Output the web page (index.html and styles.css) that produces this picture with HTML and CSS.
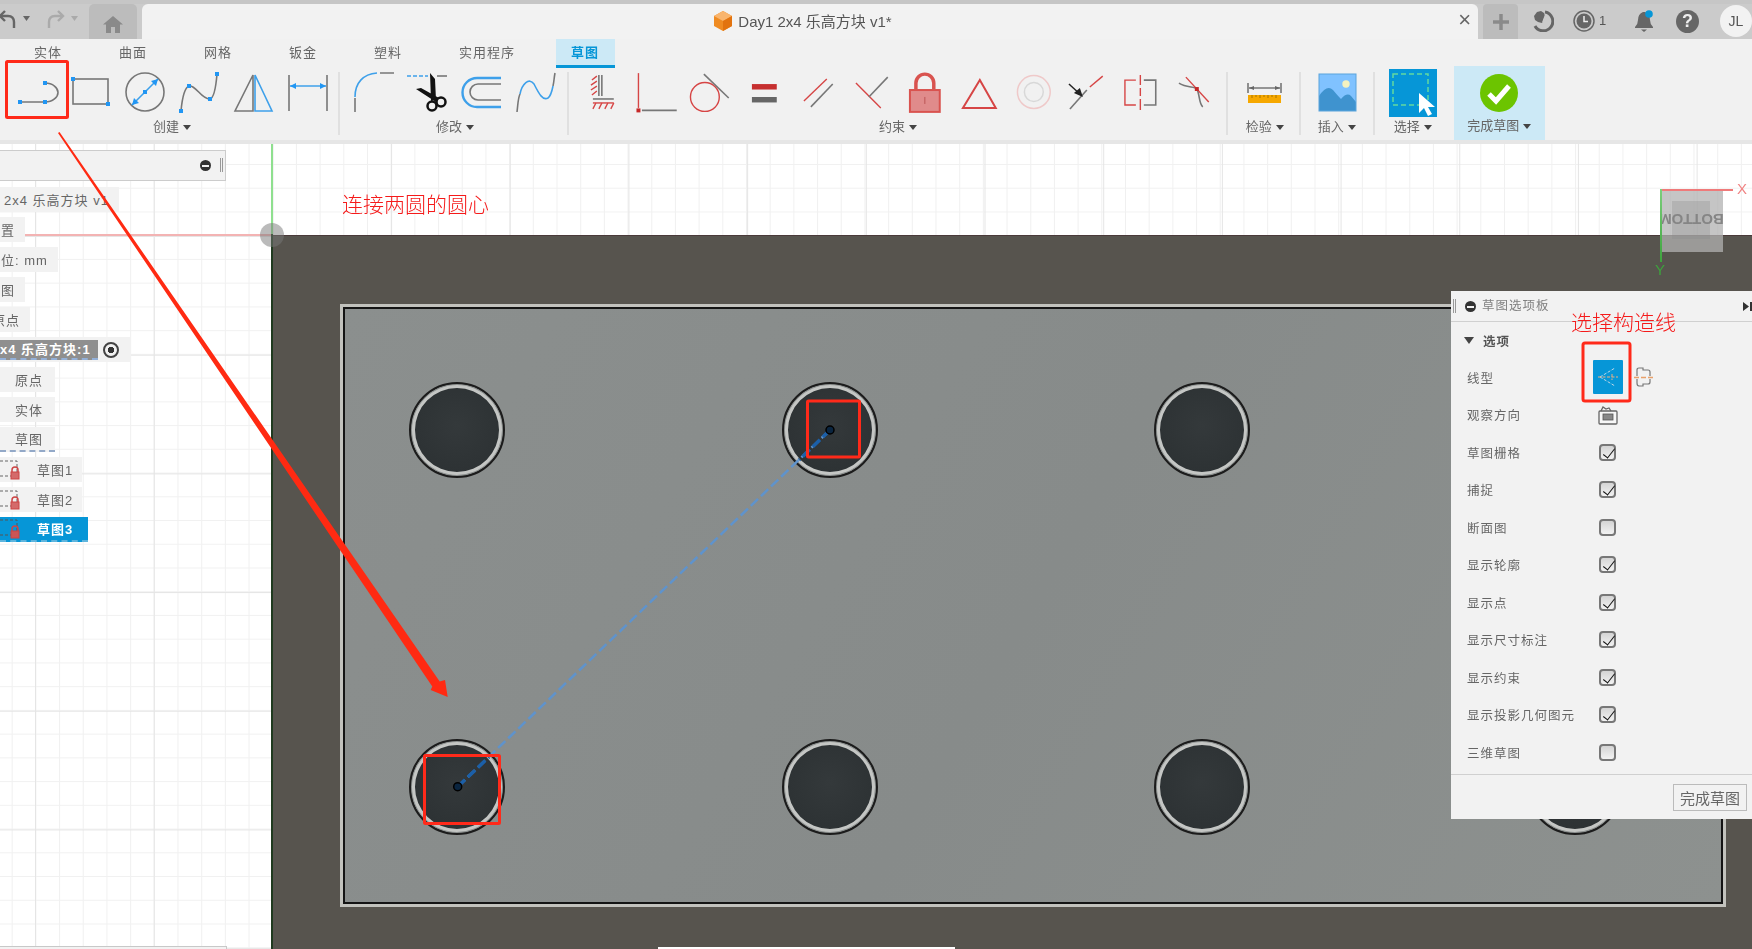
FILE: index.html
```html
<!DOCTYPE html>
<html lang="zh">
<head>
<meta charset="utf-8">
<title>Day1 2x4 乐高方块 v1*</title>
<link rel="stylesheet" href="styles.css">
</head>
<body>
<div class="app">
  <header class="topbar">
    <div class="history">
      <svg class="hist" width="78" height="24" viewBox="0 0 78 24"><path d="M14 21V15Q14 9 8 9H0" fill="none" stroke="#666" stroke-width="2.4"/><path d="M5 4L0 9L5 14" fill="none" stroke="#666" stroke-width="2.4"/><path d="M23 9H30L26.500 14Z" fill="#666"/><path d="M49 21V15Q49 9 55 9H62" fill="none" stroke="#aaa" stroke-width="2.400"/><path d="M58 4L63 9L58 14" fill="none" stroke="#aaa" stroke-width="2.400"/><path d="M71 9H78L74.500 14Z" fill="#aaa"/></svg>
    </div>
    <div class="hometab"><svg width="20" height="18" viewBox="0 0 20 18"><path d="M10 1L0 9.500H3V18H8V12H12V18H17V9.500H20Z" fill="#8a8a8a"/></svg></div>
    <div class="doctab">
      <svg class="cube" width="18" height="20" viewBox="0 0 18 20"><path d="M9 0L18 5V15L9 20L0 15V5Z" fill="#ef8b22"/><path d="M9 0L18 5L9 10L0 5Z" fill="#f9b56e"/><path d="M9 10L18 5V15L9 20Z" fill="#e2730f"/></svg>
      <span class="doctitle">Day1 2x4 乐高方块 v1*</span>
      <span class="close">×</span>
    </div>
    <div class="plustab"><svg width="16" height="16" viewBox="0 0 16 16"><path d="M8 0V16M0 8H16" stroke="#8a8a8a" stroke-width="3.500"/></svg></div>
    <svg class="jobs" width="22" height="22" viewBox="0 0 22 22"><path d="M13 2A9.500 9.500 0 1 1 3 16" fill="none" stroke="#666" stroke-width="3"/><path d="M2 6L5 2L9 1L12 3L13 6L10 13L6 12L3 10Z" fill="#666"/><path d="M14 4L11 12" stroke="#cbcbcb" stroke-width="1.500"/></svg>
    <span class="clockwrap"><svg width="22" height="22" viewBox="0 0 22 22"><circle cx="11" cy="11" r="10" fill="none" stroke="#666" stroke-width="1.500"/><circle cx="11" cy="11" r="7.500" fill="#666"/><path d="M11 6V11.500H15" fill="none" stroke="#eee" stroke-width="1.500"/></svg><span class="count">1</span></span>
    <svg class="bell" width="20" height="24" viewBox="0 0 20 24"><path d="M8 3Q3 5 3 11Q3 15 0 18V19H18V18Q15 15 15 11Q15 5 10 3Z" fill="#666"/><path d="M6 20.500H12L9 23Z" fill="#666"/><circle cx="14" cy="5" r="3.800" fill="#0696d7"/></svg>
    <span class="help">?</span>
    <span class="avatar">JL</span>
  </header>

  <section class="ribbon">
    <nav class="tabs">
      <span class="tab">实体</span><span class="tab">曲面</span><span class="tab">网格</span><span class="tab">钣金</span><span class="tab">塑料</span><span class="tab">实用程序</span><span class="tab tab-active">草图</span>
    </nav>
    <div class="toolrow">
      <div class="group">
        <div class="tools">
          <svg class="tool" viewBox="0 0 54 48"><path d="M10 32H35M35 13C43 13 48 18 48 22.500C48 27 43 32 35 32" class="g"/><path d="M8 30h4v4h-4zM33 30h4v4h-4zM33 11h4v4h-4z" class="bf"/></svg>
          <svg class="tool" viewBox="0 0 54 48"><rect x="9" y="9" width="35" height="25" class="g"/><path d="M7 7h4v4h-4zM42 32h4v4h-4z" class="bf"/></svg>
          <svg class="tool" viewBox="0 0 54 48"><circle cx="27" cy="22" r="19" class="g"/><path d="M14 35L40 9" class="b"/><path d="M40 9L33 11L38 16ZM14 35L21 33L16 28Z" class="bf"/><path d="M25 20h4v4h-4z" class="bf"/></svg>
          <svg class="tool" viewBox="0 0 54 48"><path d="M9 41C10 30 12 18 17 16C23 14 30 30 38 29C42 28 44 16 45 4" class="g"/><path d="M7 39h4v4h-4zM15 14h4v4h-4zM36 27h4v4h-4zM43 2h4v4h-4z" class="bf"/></svg>
          <svg class="tool" viewBox="0 0 54 48"><path d="M27 5V41H9Z" class="g"/><path d="M29 5L46 41H29Z" class="b"/></svg>
          <svg class="tool" viewBox="0 0 54 48"><path d="M9 5V41M47 5V41" class="g"/><path d="M10 16H46" class="b"/><path d="M10 16L16 13V19ZM46 16L40 13V19Z" class="bf"/></svg>
        </div>
        <div class="glabel">创建<i class="caret"></i></div>
      </div>
      <i class="sep sep-a"></i>
      <div class="group">
        <div class="tools">
          <svg class="tool" viewBox="0 0 54 48"><path d="M8 42V28M33 3H47" class="g"/><path d="M8 27C8 13 16 4 30 3" class="b"/></svg>
          <svg class="tool" viewBox="0 0 54 48"><path d="M6 6H27" class="b" stroke-dasharray="4 2"/><path d="M36 6H46" class="g"/><path d="M15 19L20 18L38 28L35 32ZM29 3L34 9L35 30L30 31Z" fill="#111"/><circle cx="31" cy="36" r="4.500" fill="none" stroke="#111" stroke-width="2.500"/><circle cx="40" cy="32" r="4.500" fill="none" stroke="#111" stroke-width="2.500"/></svg>
          <svg class="tool" viewBox="0 0 54 48"><path d="M46 8H22A14.500 14.500 0 0 0 22 37H46" class="b2"/><path d="M46 14H23A8 8 0 0 0 23 30H46" class="g"/></svg>
          <svg class="tool" viewBox="0 0 54 48"><path d="M8 42C9 34 9 28 11 24M44 16C45 12 45 8 46 3" class="g"/><path d="M11 24C13 14 20 7 25 14C30 24 34 31 39 28C42 26 43 21 44 16" class="b"/></svg>
        </div>
        <div class="glabel">修改<i class="caret"></i></div>
      </div>
      <i class="sep sep-a"></i>
      <div class="group">
        <div class="tools tools-tight">
          <svg class="tool" viewBox="0 0 54 48"><path d="M23 5V26M26 5V26" class="g"/><path d="M21 6L16 10M21 11L15 15M21 16L15 20M21 21L16 25" class="r"/><path d="M17 29H38" class="g"/><path d="M17 33H38" class="r"/><path d="M20 33L17 39M26 33L23 39M32 33L29 39M38 33L35 39" class="r"/></svg>
          <svg class="tool" viewBox="0 0 54 48"><path d="M8.500 3V38" class="r"/><path d="M12 40.500H47" class="g"/><path d="M6.500 38.500h4v4h-4z" fill="#c62828"/></svg>
          <svg class="tool" viewBox="0 0 54 48"><circle cx="22" cy="27" r="14.500" class="r"/><path d="M21 4L46 28" class="g"/></svg>
          <svg class="tool" viewBox="0 0 54 48"><path d="M15 14h25v5.500h-25z" fill="#c62f2f"/><path d="M15 27h25v5.500h-25z" fill="#666"/></svg>
          <svg class="tool" viewBox="0 0 54 48"><path d="M13 31L36 9" class="r"/><path d="M20 37L42 14" class="g"/></svg>
          <svg class="tool" viewBox="0 0 54 48"><path d="M12 13L37 38" class="r"/><path d="M25 27L44 7" class="g"/></svg>
          <svg class="tool" viewBox="0 0 54 48"><path d="M18 19V13A9 9 0 0 1 36 13V19" fill="none" stroke="#d9534f" stroke-width="3.500"/><rect x="12" y="20" width="30" height="22" fill="#e08b8b" stroke="#d9534f" stroke-width="2"/><path d="M27 27V34" stroke="#b55" stroke-width="1"/></svg>
          <svg class="tool" viewBox="0 0 54 48"><path d="M28 10L11 38H44Z" class="r r2"/></svg>
          <svg class="tool" viewBox="0 0 54 48"><circle cx="28" cy="22" r="16.500" fill="none" stroke="#efc9c9" stroke-width="1.500"/><circle cx="28" cy="22" r="9.500" fill="none" stroke="#d8d8d8" stroke-width="1.500"/></svg>
          <svg class="tool" viewBox="0 0 54 48"><path d="M11 39L28 20" class="g"/><path d="M31 17L44 6" class="r"/><path d="M10 14L21 24" stroke="#222" stroke-width="1.500"/><path d="M24 27L15 23L21 18Z" fill="#222"/></svg>
          <svg class="tool" viewBox="0 0 54 48"><path d="M23 10H12V35H23" class="r"/><path d="M31 10H43V35H31" class="g"/><path d="M27.500 5V15M27.500 18V26M27.500 29V40" class="r"/></svg>
          <svg class="tool" viewBox="0 0 54 48"><path d="M12 13C20 18 28 16 30 19C33 24 32 34 36 37" class="g"/><path d="M19 7L42 32" class="r"/><path d="M28 17h4v4h-4z" fill="#c62828"/></svg>
        </div>
        <div class="glabel">约束<i class="caret"></i></div>
      </div>
      <i class="sep sep-b"></i>
      <div class="group">
        <div class="tools">
          <svg class="tool" viewBox="0 0 54 48"><path d="M10 13V23M43 13V23M11 18H42" class="g"/><path d="M11 18L16 16V20ZM42 18L37 16V20Z" fill="#666"/><path d="M10 25h33v8h-33z" fill="#f6a800"/><path d="M14 25v3M18 25v2M22 25v3M26 25v2M30 25v3M34 25v2M38 25v3" stroke="#a87400" stroke-width="1"/></svg>
        </div>
        <div class="glabel">检验<i class="caret"></i></div>
      </div>
      <i class="sep sep-c"></i>
      <div class="group">
        <div class="tools">
          <svg class="tool" viewBox="0 0 54 48"><rect x="9" y="4" width="37" height="37" fill="#80c2ff"/><circle cx="36" cy="14" r="3.700" fill="#f5f2c0"/><path d="M9 41V26Q17 14 23 20Q28 26 31 29Q37 22 41 26L46 32V41Z" fill="#3f93cf"/><rect x="9" y="4" width="37" height="37" fill="none" stroke="#5ba4dc" stroke-width="1"/></svg>
        </div>
        <div class="glabel">插入<i class="caret"></i></div>
      </div>
      <i class="sep sep-d"></i>
      <div class="group">
        <svg class="selecticon" viewBox="0 0 48 48"><rect width="48" height="48" fill="#0696d7"/><rect x="4" y="5" width="35" height="31" fill="none" stroke="#63d9a0" stroke-width="1.500" stroke-dasharray="5 3"/><path d="M30 24V44L35 39L39 47L43 45L39 38H46Z" fill="#fff"/></svg>
        <div class="glabel">选择<i class="caret"></i></div>
      </div>
      <div class="finish">
        <svg width="38" height="38" viewBox="0 0 38 38"><circle cx="19" cy="19" r="19" fill="#6cc400"/><path d="M9 20L16 27L29 12" fill="none" stroke="#fff" stroke-width="5"/></svg>
        <div class="glabel finlabel">完成草图<i class="caret"></i></div>
      </div>
    </div>
  </section>

  <main class="canvas">
    <i class="axis-red"></i>
    <div class="model">
      <div class="plate">
        <i class="hole"></i><i class="hole"></i><i class="hole"></i><i class="hole"></i>
        <i class="hole"></i><i class="hole"></i><i class="hole"></i><i class="hole"></i>
      </div>
    </div>
    <i class="axis-green"></i>
    <i class="origin"></i>
    <svg class="sketch" width="1752" height="805" viewBox="0 144 1752 805">
      <path d="M457.700 786.700L830 430" fill="none" stroke="#5f93cc" stroke-width="2.500" stroke-dasharray="10 4"/>
      <path d="M457.700 786.700L489 757M830 430L799 460" fill="none" stroke="#1b5fa8" stroke-width="3.500" stroke-dasharray="10 4"/>
      <circle cx="457.700" cy="786.700" r="4" fill="#0a2540" stroke="#000" stroke-width="1.500"/>
      <circle cx="830" cy="430" r="4" fill="#0a2540" stroke="#000" stroke-width="1.500"/>
    </svg>

    <aside class="browser">
      <div class="bhead"><i class="minus"></i><i class="grip"></i></div>
      <div class="brow"><span>2x4 乐高方块 v1</span></div>
      <div class="brow"><span class="clip13">设置</span></div>
      <div class="brow"><span class="clip13">单位: mm</span></div>
      <div class="brow"><span class="clip13">视图</span></div>
      <div class="brow"><span class="clip8">原点</span></div>
      <div class="brow brow-comp"><span class="compname">x4 乐高方块:1</span><i class="radio"></i></div>
      <div class="brow brow-in"><span>原点</span></div>
      <div class="brow brow-in"><span>实体</span></div>
      <div class="brow brow-in brow-dash"><span>草图</span></div>
      <div class="brow brow-sk">
        <svg width="20" height="24" viewBox="0 0 20 24"><path d="M0 3H17V18M0 18H12" fill="none" stroke="#666" stroke-width="1" stroke-dasharray="3 2"/><path d="M12 14V12A3 3 0 0 1 18 12V14" fill="none" stroke="#c44" stroke-width="1.500"/><rect x="11" y="14" width="8" height="7" fill="#d46a6a" stroke="#c44"/></svg>
        <span>草图1</span>
      </div>
      <div class="brow brow-sk">
        <svg width="20" height="24" viewBox="0 0 20 24"><path d="M0 3H17V18M0 18H12" fill="none" stroke="#666" stroke-width="1" stroke-dasharray="3 2"/><path d="M12 14V12A3 3 0 0 1 18 12V14" fill="none" stroke="#c44" stroke-width="1.500"/><rect x="11" y="14" width="8" height="7" fill="#d46a6a" stroke="#c44"/></svg>
        <span>草图2</span>
      </div>
      <div class="brow brow-sk brow-sel">
        <svg width="20" height="24" viewBox="0 0 20 24"><path d="M0 3H17V18M0 18H12" fill="none" stroke="#555" stroke-width="1" stroke-dasharray="3 2"/><path d="M12 14V12A3 3 0 0 1 18 12V14" fill="none" stroke="#c44" stroke-width="1.500"/><rect x="11" y="14" width="8" height="7" fill="#c55" stroke="#c44"/></svg>
        <span>草图3</span>
      </div>
    </aside>

    <div class="gizmo">
      <div class="cubeface"><i class="cubeinner"></i><span class="cubetext">BOTTOM</span></div>
      <i class="gx"></i><i class="gy"></i>
      <span class="lx">X</span><span class="ly">Y</span>
    </div>

    <aside class="options">
      <div class="ophead"><i class="grip"></i><i class="minus"></i><span class="optitle">草图选项板</span><svg class="opend" width="9" height="9" viewBox="0 0 9 9"><path d="M0 0L6 4.500L0 9ZM7 0H9V9H7Z" fill="#333"/></svg></div>
      <div class="opsection"><i class="tri"></i><span>选项</span></div>
      <div class="oprow"><span>线型</span><span class="opctl">
        <span class="linebtn"><svg width="22" height="22" viewBox="0 0 22 22"><path d="M3 11L18 2M3 11L18 20" stroke="#bcd6e8" stroke-width="1" stroke-dasharray="3 1.500" fill="none"/><path d="M1 11H21M15 8V14" stroke="#f0b080" stroke-width="1" stroke-dasharray="3 1.500" fill="none"/></svg></span>
        <svg class="linealt" width="20" height="20" viewBox="0 0 20 20"><path d="M3 9V3Q3 1 5 1H9V3H14Q16 3 16 5V9M3 12V16Q3 19 5 19H9V17H14Q16 17 16 15V12" fill="none" stroke="#777" stroke-width="1.200"/><path d="M0 10.500H20" stroke="#e8a06a" stroke-width="1.400" stroke-dasharray="5 2"/></svg>
      </span></div>
      <div class="oprow"><span>观察方向</span><span class="opctl"><svg width="20" height="20" viewBox="0 0 20 20"><rect x="1" y="6" width="18" height="13" rx="1" fill="#f7f7f7" stroke="#666" stroke-width="1.300"/><rect x="5" y="9" width="10" height="6" fill="#888" stroke="#555" stroke-width=".8"/><path d="M3 6L5 2L8 4L11 3L13 6" fill="none" stroke="#666" stroke-width="1.300"/></svg></span></div>
      <div class="oprow"><span>草图栅格</span><span class="opctl"><i class="cb on"></i></span></div>
      <div class="oprow"><span>捕捉</span><span class="opctl"><i class="cb on"></i></span></div>
      <div class="oprow"><span>断面图</span><span class="opctl"><i class="cb"></i></span></div>
      <div class="oprow"><span>显示轮廓</span><span class="opctl"><i class="cb on"></i></span></div>
      <div class="oprow"><span>显示点</span><span class="opctl"><i class="cb on"></i></span></div>
      <div class="oprow"><span>显示尺寸标注</span><span class="opctl"><i class="cb on"></i></span></div>
      <div class="oprow"><span>显示约束</span><span class="opctl"><i class="cb on"></i></span></div>
      <div class="oprow"><span>显示投影几何图元</span><span class="opctl"><i class="cb on"></i></span></div>
      <div class="oprow"><span>三维草图</span><span class="opctl"><i class="cb"></i></span></div>
      <div class="opfoot"><button class="finbtn">完成草图</button></div>
    </aside>
    <i class="bottomline"></i>
    <i class="bottomstrip"></i>
  </main>

  <svg class="marks" width="1752" height="949" viewBox="0 0 1752 949">
    <path d="M58 133L59.500 132L439.700 681.500L445 680L447.700 697L430.700 690L432.300 686.500Z" fill="#ff2a12"/>
    <rect x="6.500" y="61.500" width="61" height="56" rx="1" class="box"/>
    <rect x="1583" y="343" width="47" height="58" rx="2" class="box"/>
    <rect x="807.500" y="401" width="52" height="56" rx="1" class="box"/>
    <rect x="424.500" y="755.500" width="75" height="68" rx="1" class="box"/>
  </svg>
  <span class="note note-a">连接两圆的圆心</span>
  <span class="note note-b">选择构造线</span>
</div>
</body>
</html>
```
FILE: styles.css
```css
* { box-sizing: border-box; }
html, body { margin: 0; height: 100%; overflow: hidden; background: #fff; }
body { font-family: "Liberation Sans", "Noto Sans CJK SC", sans-serif; color: #666; }
i { display: block; font-style: normal; }
svg { display: block; flex: none; }

.app { position: relative; width: 1752px; height: 949px; display: flex; flex-direction: column; overflow: hidden; }

/* the reference is a slightly soft, rescaled capture */
.topbar, .ribbon, .browser, .options, .gizmo { filter: blur(.35px); }

/* title strip */
.topbar { height: 39px; flex: none; display: flex; align-items: stretch; background: #cbcbcb; border-top: 4px solid #c6c6c6; }
.history { width: 89px; display: flex; align-items: center; }
.hist { margin-top: -5px; }
.hometab { width: 48px; margin-right: 5px; background: #bcbcbc; border-radius: 5px 5px 0 0; display: flex; align-items: center; justify-content: center; padding-top: 5px; }
.doctab { width: 1336px; background: #f2f2f2; border-radius: 6px 6px 0 0; display: flex; align-items: center; justify-content: center; padding-right: 14px; position: relative; }
.cube { margin-right: 6px; margin-top: -2px; }
.doctitle { font-size: 15px; color: #555; margin-top: -3px; }
.close { position: absolute; right: 7px; top: 3px; font-size: 22px; line-height: 26px; color: #666; }
.plustab { width: 35px; margin-left: 5px; background: #bcbcbc; border-radius: 4px 4px 0 0; display: flex; align-items: center; justify-content: center; }
.jobs { margin: 6px 0 0 14px; }
.clockwrap { margin: 6px 0 0 19px; display: flex; width: 36px; }
.count { font-size: 13px; line-height: 22px; margin-left: 4px; color: #555; }
.bell { margin: 5px 0 0 26px; }
.help { margin: 6px 0 0 21px; width: 23px; height: 23px; border-radius: 50%; background: #666; color: #eee; font-weight: 700; font-size: 18px; line-height: 23px; text-align: center; }
.avatar { margin: 1px 0 0 21px; width: 32px; height: 32px; border-radius: 50%; background: #f2f2f2; color: #555; font-size: 14px; line-height: 32px; text-align: center; }

/* ribbon */
.ribbon { height: 105px; flex: none; background: #f1f1f1; border-bottom: 4px solid #e6e6e6; }
.tabs { height: 29px; display: flex; padding-left: 5.500px; align-items: stretch; }
.tab { padding: 0 28.500px; font-size: 13px; letter-spacing: 1px; line-height: 27px; color: #666; white-space: nowrap; }
.tab-active { padding: 0 15.500px; margin-left: 12px; margin-right: 1px; background: #cce9f6; border-bottom: 3px solid #0696d7; color: #0696d7; font-weight: 700; }
.toolrow { display: flex; height: 72px; padding-left: 10px; }
.group { display: flex; flex-direction: column; align-items: center; padding-top: 2px; }
.tools { display: flex; }
.tool { width: 54px; height: 48px; }
.tools-tight .tool { width: 53.700px; }
.glabel { height: 18px; font-size: 13px; line-height: 18px; display: flex; align-items: center; color: #666; white-space: nowrap; }
.caret { width: 0; height: 0; border: 4px solid transparent; border-top: 5px solid #444; border-bottom: 0; margin-left: 4px; }
.sep { width: 2px; height: 63px; margin-top: 4px; background: #e0e0e0; }
.sep-a { margin-left: 4px; margin-right: 7px; }
.sep-b { margin-left: 6px; margin-right: 9.600px; }
.sep-c { margin-left: 7px; margin-right: 9px; }
.sep-d { margin-left: 9px; margin-right: 14px; }
.selecticon { width: 48px; height: 48px; margin-top: -1px; margin-bottom: 1px; }
.finish { margin-left: 17px; margin-top: -2px; width: 91px; height: 74px; background: #cce9f6; display: flex; flex-direction: column; align-items: center; padding-top: 8px; }
.finlabel { margin-top: 5px; }

.g { fill: none; stroke: #777; stroke-width: 1.600; }
.b { fill: none; stroke: #3ea0ea; stroke-width: 1.600; }
.b2 { fill: none; stroke: #3ea0ea; stroke-width: 2.400; }
.bf { fill: #2196f3; }
.r { fill: none; stroke: #d64545; stroke-width: 1.400; }
.r2 { stroke-width: 2; }

/* canvas */
.canvas {
  flex: 1; position: relative; overflow: hidden; background-color: #fff;
  background-image:
    linear-gradient(#e5e5e5 1px, transparent 1px),
    linear-gradient(90deg, #e5e5e5 1px, transparent 1px),
    linear-gradient(#f1f1f1 1px, transparent 1px),
    linear-gradient(90deg, #f0f0f0 1px, transparent 1px);
  background-size: 118.700px 118.700px, 118.700px 118.700px, 23.740px 23.740px, 23.700px 23.700px;
  background-position: 0 92px, 35px 0, 0 20px, 11.700px 0;
}
.model { position: absolute; left: 272px; top: 91px; right: 0; bottom: 0; background: #57544e; border-top: 1px solid #4a3a3a; }
.plate {
  position: absolute; left: 68px; top: 68px; width: 1386px; height: 603px;
  border: 3px solid #c2c2bd; outline: 2px solid #141414; outline-offset: -5px;
  background: linear-gradient(120deg, #8b8f8e, #878b8a 50%, #8d918f);
  display: grid; grid-template-columns: repeat(4, 96px); grid-auto-rows: 96px;
  column-gap: 276.500px; row-gap: 260.700px; padding: 75px 0 0 66px;
}
.hole {
  width: 96px; height: 96px; border-radius: 50%; border: 2px solid #1c1c1c;
  background: radial-gradient(circle at 50% 45%, #34393b, #2a2f31);
  box-shadow: inset 0 0 0 1px #8a8e8d, inset 0 0 0 4px #c4c6c4;
  filter: blur(.4px);
}
.axis-red { position: absolute; left: 0; top: 90px; width: 272px; height: 2px; background: #f3b3b3; }
.axis-green { position: absolute; left: 271px; top: 0; width: 2px; bottom: 0; background: linear-gradient(#8fe08f 0, #8fe08f 90px, #1f3a1f 90px); }
.origin { position: absolute; left: 260px; top: 79px; width: 24px; height: 24px; border-radius: 50%; background: rgba(120, 120, 120, .5); }
.sketch { position: absolute; left: 0; top: 0; }
.bottomline { position: absolute; left: 0; bottom: 0; width: 227px; height: 3px; background: #f2f2f2; border-top: 1px solid #c8c8c8; border-right: 1px solid #c8c8c8; }
.bottomstrip { position: absolute; left: 658px; bottom: 0; width: 297px; height: 2px; background: #fff; }

/* browser */
.browser { position: absolute; left: 0; top: 6px; width: 226px; display: flex; flex-direction: column; gap: 5px; font-size: 13px; letter-spacing: 1px; color: #666; }
.bhead { height: 31px; background: #f2f2f2; border: 1px solid #ccc; border-left: 0; position: relative; margin-bottom: 1px; }
.browser .minus { left: 200px; top: 9px; }
.browser .grip { left: 220px; top: 7px; }
.minus { position: absolute; width: 11px; height: 11px; border-radius: 50%; background: #333; }
.minus::after { content: ""; position: absolute; left: 2px; right: 2px; top: 4.500px; height: 2px; background: #f2f2f2; }
.grip { position: absolute; width: 3px; height: 14px; border-left: 1px solid #999; border-right: 1px solid #999; }
.brow { height: 25px; display: flex; align-items: center; width: fit-content; background: #f2f2f2; padding: 0 10px 0 4px; white-space: nowrap; overflow: hidden; }
.clip13 { margin-left: -17px; }
.clip8 { margin-left: -12px; }
.brow-comp { padding: 0 12px 0 0; overflow: visible; position: relative; }
.compname { width: 98px; height: 20px; line-height: 20px; background: #8f8f8f; color: #fff; font-weight: 700; border-bottom: 2px dashed #93b0d8; overflow: hidden; }
.radio { width: 16px; height: 16px; margin-left: 5px; border: 2px solid #444; border-radius: 50%; background: radial-gradient(circle, #333 0 3px, transparent 3.500px); flex: none; }
.brow-in { width: 55px; padding: 0 0 0 15px; }
.brow-dash { border-bottom: 2px dashed #93a9c8; }
.brow-sk { width: 82px; padding: 0; }
.brow-sk span { margin-left: 17px; }
.brow-sel { width: 88px; background: #0696d7; color: #fff; font-weight: 700; border-bottom: 2px dashed #5fb5dd; }

/* view cube */
.gizmo { position: absolute; left: 1660px; top: 45px; width: 90px; height: 90px; }
.cubeface { position: absolute; left: 0; top: 0; width: 63px; height: 63px; background: rgba(178, 178, 178, .75); }
.cubeinner { position: absolute; left: 12px; top: 12px; width: 38px; height: 38px; background: rgba(140, 140, 140, .3); }
.cubetext { position: absolute; left: -2px; right: -2px; top: 21px; text-align: center; font-size: 15px; font-weight: 700; line-height: 18px; color: #858585; transform: rotate(180deg); }
.gx { position: absolute; left: 0; top: 0; width: 73px; height: 2px; background: #ef7a7a; }
.gy { position: absolute; left: 0; top: 0; width: 2px; height: 73px; background: linear-gradient(#7ccf7c, #3da33d); }
.lx { position: absolute; left: 77px; top: -9px; font-size: 15px; line-height: 18px; color: #f08484; }
.ly { position: absolute; left: -5px; top: 72px; font-size: 15px; line-height: 18px; color: #3da33d; }

/* options panel */
.options { position: absolute; left: 1451px; top: 147px; width: 301px; height: 528px; background: #f2f2f2; display: flex; flex-direction: column; font-size: 12.500px; letter-spacing: 1px; color: #666; }
.ophead { height: 31px; flex: none; border-bottom: 1px solid #d0d0d0; position: relative; }
.ophead .grip { left: 2px; top: 8px; }
.ophead .minus { left: 14px; top: 10px; }
.optitle { position: absolute; left: 31px; top: 0; line-height: 30px; color: #808080; }
.opend { position: absolute; right: 0; top: 11px; }
.opsection { height: 36.250px; flex: none; display: flex; align-items: center; padding-left: 13px; font-weight: 700; color: #555; }
.tri { width: 0; height: 0; border: 5px solid transparent; border-top: 7px solid #444; border-bottom: 0; margin-right: 9px; }
.oprow { height: 37.500px; flex: none; display: grid; grid-template-columns: 125.700px 30px; align-items: center; padding-left: 16px; white-space: nowrap; }
.opctl { display: flex; align-items: center; justify-content: center; position: relative; }
.linebtn { width: 30px; height: 34px; background: #0696d7; display: flex; align-items: center; justify-content: center; border-radius: 1px; flex: none; }
.linealt { position: absolute; left: 41px; top: 50%; margin-top: -10px; }
.cb { width: 17px; height: 17px; border: 2px solid #777; border-radius: 4px; background: linear-gradient(#d4d4d4, #f2f2f2); position: relative; }
.cb.on::after { content: ""; position: absolute; left: 4.500px; top: 0; width: 5px; height: 11px; border: solid #111; border-width: 0 1.600px 1.600px 0; transform: rotate(38deg); }
.opfoot { flex: 1; margin-top: 3px; border-top: 1px solid #d0d0d0; display: flex; justify-content: flex-end; align-items: flex-start; padding: 9px 5px 0 0; }
.finbtn { width: 74px; height: 27px; padding: 0; border: 1px solid #bbb; background: #f2f2f2; font-family: "Liberation Sans", "Noto Sans CJK SC", sans-serif; font-size: 15px; color: #666; }

/* annotations */
.marks { position: absolute; left: 0; top: 0; pointer-events: none; }
.box { fill: none; stroke: #ff2a1a; stroke-width: 3; }
.note { position: absolute; font-size: 21px; font-weight: 300; line-height: 26px; color: #f51a1a; white-space: nowrap; }
.note-a { left: 342px; top: 192px; }
.note-b { left: 1571px; top: 310px; }
```
